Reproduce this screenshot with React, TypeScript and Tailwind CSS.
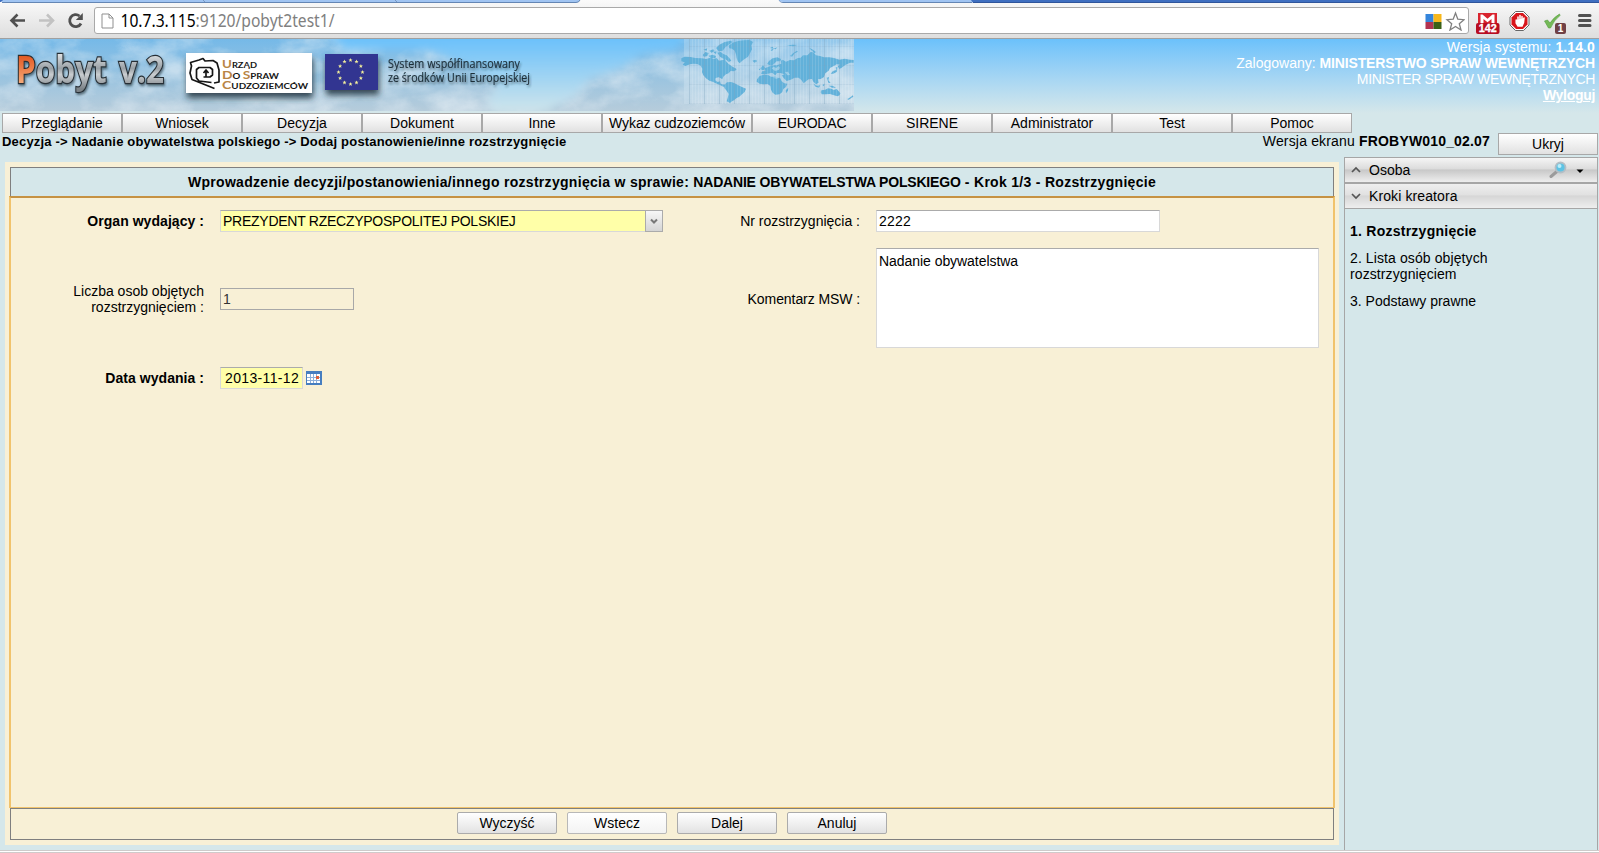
import React from "react";

const menu = [
  ["Przeglądanie", "w-[120px]"],
  ["Wniosek", "w-[120px]"],
  ["Decyzja", "w-[120px]"],
  ["Dokument", "w-[120px]"],
  ["Inne", "w-[120px]"],
  ["Wykaz cudzoziemców", "w-[150px] tracking-[-0.1px]"],
  ["EURODAC", "w-[120px] tracking-[-0.2px]"],
  ["SIRENE", "w-[120px]"],
  ["Administrator", "w-[120px]"],
  ["Test", "w-[120px]"],
  ["Pomoc", "w-[120px]"],
];

function Toolbar() {
  return (
    <div className="relative h-[39px] shrink-0 border-b border-[#a0a0a0] bg-gradient-to-b from-[#fafafa] to-[#dedede]">
      <svg className="absolute left-0 top-0" width="1599" height="3" viewBox="0 0 1599 3">
        <path d="M0 0H580Q579 2.5 576 2.5H3L0 0Z" fill="#a0c4f2" />
        <path d="M2 2.5H576Q579 2.5 580 0M779 0Q780 2.5 783 2.5H972" fill="none" stroke="#6486b4" />
        <path d="M779 0H972V2H783Q780 2 779 0Z" fill="#a0c4f2" />
        <path d="M971 0H1599V3H973Z" fill="#3f6fc0" />
        <path d="M973 2.5H1599" stroke="#2f559b" />
        <path d="M0 0H3L1 2H0Z" fill="#3f6fc0" />
        <path d="M203 0L205 2M395 0L397 2" stroke="#7797c2" />
      </svg>
      <div className="flex h-full items-start">
        <svg className="mt-[7px] shrink-0" width="94" height="27" viewBox="0 7 94 27">
          <path d="M25 20.5H12M17.5 14.5L11.5 20.5L17.5 26.5" fill="none" stroke="#505050" strokeWidth="2.6" />
          <path d="M39 20.5H52M47 14.5L53 20.5L47 26.5" fill="none" stroke="#c2c2c2" strokeWidth="2.6" />
          <path d="M81 23.500A6 6 0 1 1 79.500 16" fill="none" stroke="#505050" strokeWidth="2.800" />
          <path d="M82.800 13V20H75.800Z" fill="#505050" />
        </svg>
        <div className="mt-[7px] flex h-[27px] w-[1375px] shrink-0 items-center rounded-[3px] border border-[#a9a9a9] bg-white">
          <svg className="ml-[6px]" width="13" height="16" viewBox="0 0 13 16">
            <path d="M1 1H8L12 5V15H1ZM8 1V5H12" fill="#fff" stroke="#8f8f8f" />
          </svg>
          <svg className="ml-[6px] block overflow-visible font-['Noto_Sans',sans-serif]" width="220" height="24">
            <text x="0.500" y="18" textLength="214" lengthAdjust="spacingAndGlyphs" fontSize="17.500" fill="#808080">
              <tspan fill="#000">10.7.3.115</tspan>:9120/pobyt2test1/
            </text>
          </svg>
          <svg className="ml-auto mr-[3px]" width="41" height="20" viewBox="1424 10 41 20">
            <rect x="1425.500" y="13" width="8" height="8" fill="#3585dc" />
            <rect x="1433.500" y="13" width="8" height="8" fill="#f7b71b" />
            <rect x="1425.500" y="21" width="8" height="7" fill="#b23351" />
            <rect x="1433.500" y="21" width="8" height="7" fill="#3b6117" />
            <path d="M1455.500 12L1457.800 18.200L1464 18.700L1459.300 22.700L1461 29L1455.500 25.500L1450 29L1451.700 22.700L1447 18.700L1453.200 18.200Z" fill="#fff" stroke="#808080" strokeWidth="1.300" />
          </svg>
        </div>
        <svg className="mt-[7px] shrink-0" width="130" height="30" viewBox="1469 7 130 30">
          <rect x="1478" y="13" width="19" height="13" fill="#d9232e" />
          <path d="M1480.500 23V14.500H1482.500L1487.500 18.800L1492.500 14.500H1494.500V23H1491.500V19L1487.500 22.300L1483.500 19V23Z" fill="#fff" />
          <rect x="1476" y="23" width="23.500" height="11" rx="2" fill="#b80d20" />
          <text x="1487.700" y="32.200" fontSize="10" fontWeight="bold" textAnchor="middle" fill="#fff" stroke="#fff" strokeWidth=".3" textLength="18" lengthAdjust="spacingAndGlyphs">142</text>
          <path d="M1515.500 11.500H1523.500L1529 17V25L1523.500 30.500H1515.500L1510 25V17Z" fill="#fff" stroke="#666" />
          <path d="M1516 13H1523L1527.500 17.500V24.500L1523 29H1516L1511.500 24.500V17.500Z" fill="#d8151b" />
          <path d="M1516.200 20V23L1518 26H1522L1523.500 22.500L1524 18M1518 22V17M1520 22V15.500M1522 22V16.500" fill="#fff" stroke="#fff" strokeWidth="1.500" strokeLinecap="round" />
          <path d="M1544.500 21L1547.500 20L1550 23Q1554 17 1559.500 14L1560 15.500Q1554 20 1550.500 28H1548.500Z" fill="#74b957" stroke="#539b3b" strokeWidth=".6" />
          <rect x="1555" y="23" width="11" height="11" rx="2" fill="#704045" />
          <text x="1560.500" y="32.200" fontSize="10" fontWeight="bold" textAnchor="middle" fill="#fff">1</text>
          <path d="M1579.500 15.500H1590M1579.500 20.500H1590M1579.500 25.500H1590" stroke="#505050" strokeWidth="3" strokeLinecap="round" />
        </svg>
      </div>
    </div>
  );
}

const stars = Array.from({ length: 12 }, (_, i) => i * 30);

function WorldMap() {
  return (
    <g transform="translate(670 38) scale(.33333)" fill="#62b1da">
      <path d="M34 61L44 56L62 57L76 60L96 61L108 63L122 59L132 63L140 60L147 68L158 66L164 62L168 70L176 78L188 86L200 94L192 100L182 99L176 106L168 109L160 116L157 124L152 121L146 118L137 120L136 127L143 132L150 130L152 137L164 140L171 146L160 146L148 140L137 136L128 131L118 128L108 121L100 112L96 102L97 92L92 83L82 78L70 77L60 79L46 84L38 80L44 73L34 70Z" />
      <path d="M98 51L106 42L116 45L112 54L102 56ZM116 53L128 50L138 54L136 61L122 60ZM118 38L130 34L134 40L124 44ZM138 30L148 20L164 12L182 8L188 12L176 20L166 28L158 38L146 40ZM142 44L152 42L160 48L170 52L178 60L184 68L176 72L170 66L160 62L150 56ZM130 43L140 40L138 48ZM100 35L112 31L110 38ZM186 92L196 90L198 97L188 98Z" />
      <path d="M176 23L188 14L204 9L222 7L238 6L250 12L244 22L246 34L240 46L234 56L224 63L216 69L209 76L203 70L200 60L198 48L194 38L186 32L178 31ZM247 68L256 65L262 69L254 74ZM299 30L308 26L312 32L306 39L301 36L318 29L322 27L318 34Z" />
      <path d="M163 140L171 133L184 132L194 136L205 142L216 147L228 152L224 162L216 169L208 176L199 181L192 187L186 190L180 195L170 190L173 180L176 168L170 158L163 150Z" />
      <path d="M261 124L269 114L281 110L293 110L303 116L316 116L330 119L335 130L343 136L352 137L348 147L340 153L337 162L329 169L316 170L308 164L303 155L301 144L293 138L280 139L269 137L260 131ZM347 157L355 149L354 158L348 166Z" />
      <path d="M273 108L276 100L286 99L284 91L292 88L303 83L312 82L320 82L334 77L333 68L338 65L348 71L360 66L372 67L383 60L392 59L399 52L412 52L422 42L430 43L438 52L450 54L462 58L478 58L492 60L508 65L524 62L540 65L551 66L551 74L540 74L526 81L515 89L508 93L503 84L510 80L500 79L490 85L480 90L476 98L466 106L462 117L452 123L444 124L446 134L438 139L430 131L426 123L416 124L408 130L401 136L394 126L386 119L374 119L362 125L350 129L341 120L335 112L344 109L331 105L321 105L316 112L306 104L294 107L284 109Z" />
      <path d="M291 78L297 69L308 61L322 58L333 63L331 70L320 70L311 79L303 83ZM272 90L279 82L285 89L283 95L275 97ZM266 94L272 91L269 97ZM360 54L370 45L381 38L384 41L374 46L366 56ZM417 29L427 34L438 42L434 46L424 37ZM351 23L367 20L381 21L370 25ZM482 107L489 99L499 96L497 88L502 87L501 101L490 107ZM470 119L477 117L475 127L482 135L475 134ZM431 137L441 143L451 142L447 149L436 146ZM457 141L464 137L462 145ZM476 143L488 143L498 149L486 149Z" />
      <path d="M454 157L466 155L474 151L484 152L491 156L500 153L505 158L511 166L509 172L502 175L492 172L480 168L466 169L455 169L452 163ZM532 183L541 178L548 172L550 176L543 181L535 186Z" />
      <path d="M305 91L311 86L319 90L325 84L331 89L326 96L315 99ZM345 102L354 101L360 111L352 112ZM309 119L322 116L331 118L320 122Z" fill="#b6d9ec" opacity=".65" />
    </g>
  );
}

function Banner() {
  return (
    <div className="flex h-[74px] shrink-0 justify-between bg-gradient-to-b from-[#6bc1fb] to-[#d5e7ea]">
      <svg width="854" height="72" viewBox="0 39 854 72" className="shrink-0">
        <defs>
          <linearGradient id="sky" x1="0" y1="0" x2="0" y2="1">
            <stop offset="0" stopColor="#75b9e8" />
            <stop offset=".5" stopColor="#98c3e0" />
            <stop offset="1" stopColor="#b6ccdb" />
          </linearGradient>
          <linearGradient id="gap" gradientUnits="userSpaceOnUse" x1="0" y1="39" x2="0" y2="111">
            <stop offset="0" stopColor="#6bc1fb" />
            <stop offset="1" stopColor="#cfe5eb" />
          </linearGradient>
          <linearGradient id="metal" gradientUnits="userSpaceOnUse" x1="0" y1="52" x2="0" y2="93">
            <stop offset=".05" stopColor="#dfe2e4" />
            <stop offset=".4" stopColor="#9aa1a6" />
            <stop offset=".55" stopColor="#c9cdd0" />
            <stop offset=".9" stopColor="#7c8388" />
          </linearGradient>
          <linearGradient id="orange" gradientUnits="userSpaceOnUse" x1="0" y1="54" x2="0" y2="84">
            <stop offset="0" stopColor="#e2541c" />
            <stop offset="1" stopColor="#f6ad7c" />
          </linearGradient>
          <filter id="soft" x="-20%" y="-30%" width="140%" height="160%"><feGaussianBlur stdDeviation="4" /></filter>
          <filter id="clouds" x="0" y="0" width="100%" height="100%">
            <feTurbulence type="fractalNoise" baseFrequency=".022 .034" numOctaves="5" seed="8" />
            <feColorMatrix values="0 0 0 0 .80  0 0 0 0 .87  0 0 0 0 .92  2.2 0 0 0 -.8" />
          </filter>
          <filter id="shade" x="-20%" y="-20%" width="150%" height="170%"><feDropShadow dx="1" dy="5" stdDeviation="3" floodColor="#20303c" floodOpacity=".85" /></filter>
          <filter id="textShade" x="-10%" y="-20%" width="120%" height="160%"><feDropShadow dx="1" dy="2" stdDeviation="1.200" floodColor="#20303c" floodOpacity=".6" /></filter>
          <pattern id="grid" width="15" height="19" patternUnits="userSpaceOnUse" x="689" y="46">
            <path d="M.5 0V19" stroke="#7da3bd" strokeOpacity=".35" fill="none" />
            <path d="M0 .5H15" stroke="#7da3bd" strokeOpacity=".15" fill="none" />
            <path d="M3.500 0V19M6.500 0V19M9.500 0V19M12.500 0V19" stroke="#fff" strokeOpacity=".12" />
          </pattern>
        </defs>
        <rect y="39" width="854" height="72" fill="url(#sky)" />
        <rect y="39" width="854" height="72" filter="url(#clouds)" opacity=".6" />
        <path d="M326 30H690L676 50L642 54L620 68L590 78L575 95L546 112H492L488 99L500 84L470 66L430 50L345 50Z" fill="url(#gap)" filter="url(#soft)" />
        <rect x="684" y="39" width="170" height="65" fill="#d9eaf5" opacity=".3" />
        <WorldMap />
        <rect x="689" y="39" width="165" height="65" fill="url(#grid)" />
        <text x="16" y="83" textLength="148" lengthAdjust="spacingAndGlyphs" xmlSpace="preserve" fontFamily="Open Sans, sans-serif" fontSize="38" fontWeight="700" filter="url(#textShade)" stroke="#272f35" strokeWidth="2.400" paintOrder="stroke" fill="url(#metal)">
          <tspan fill="url(#orange)">P</tspan>obyt<tspan dx="5"> v.2</tspan>
        </text>
        <rect x="186" y="53" width="126" height="40" fill="#fff" filter="url(#shade)" />
        <path d="M214.500 88.500L202 83.500L192 79.500L190 73L191.500 66L190.500 62.500L199 60L203 58.500L205 61L213 60.500L217 63L219 70V82L214 83M211.500 82.500L199 81L196.500 78V69.500L199 67.500H210L212.500 69.500V75L210 77H203.500M206 71.500V77M203.500 73L206 70L208.500 73" fill="none" stroke="#161616" strokeWidth="1.700" strokeLinejoin="round" />
        <g fill="#161616" fontFamily="Lato, sans-serif" fontWeight="700">
          <text x="222" y="68" fontSize="8" textLength="35" lengthAdjust="spacingAndGlyphs"><tspan fontSize="11.500" fill="#b98544">U</tspan>RZĄD</text>
          <text x="222" y="78.500" fontSize="8" textLength="57" lengthAdjust="spacingAndGlyphs"><tspan fontSize="11.500" fill="#b98544">D</tspan>O <tspan fontSize="11.500" fill="#b98544">S</tspan>PRAW</text>
          <text x="222" y="89" fontSize="8" textLength="86" lengthAdjust="spacingAndGlyphs"><tspan fontSize="11.500" fill="#b98544">C</tspan>UDZOZIEMCÓW</text>
        </g>
        <rect x="325" y="54" width="53" height="36" fill="#313591" filter="url(#shade)" />
        {stars.map((angle) => (
          <path key={angle} transform={`rotate(${angle} 350.500 72) translate(350.500 60) rotate(${-angle})`} d="M0-2L.6-.6L2-.6L.9.400L1.300 2L0 1L-1.300 2L-.9.400L-2-.6L-.6-.6Z" fill="#f2ee9b" />
        ))}
        <g fill="#1d2f3a" stroke="#1d2f3a" strokeWidth=".15" fontFamily="Open Sans, sans-serif" fontSize="11.800" filter="url(#textShade)">
          <text x="388" y="68" textLength="132" lengthAdjust="spacingAndGlyphs">System współfinansowany</text>
          <text x="388" y="82" textLength="142" lengthAdjust="spacingAndGlyphs">ze środków Unii Europejskiej</text>
        </g>
      </svg>
      <div className="mr-[4px] text-right text-white">
        <div className="tracking-[0.1px]">Wersja systemu: <b>1.14.0</b></div>
        <div>Zalogowany: <b className="tracking-[-0.15px]">MINISTERSTWO SPRAW WEWNĘTRZYCH</b></div>
        <div className="tracking-[-0.35px]">MINISTER SPRAW WEWNĘTRZNYCH</div>
        <div className="tracking-[-0.3px]"><b className="underline">Wyloguj</b></div>
      </div>
    </div>
  );
}

function Form() {
  return (
    <main className="mt-[5px] ml-[5px] flex h-[683px] w-[1334px] flex-col bg-[#f8f0d6] p-[5px] pr-[4px]">
      <div className="flex h-[29px] w-[1324px] items-center justify-center border border-b-0 border-[#7f7f7f] bg-[#d5e7ea] font-bold">
        <p className="whitespace-pre tracking-[0.3px]">Wprowadzenie decyzji/postanowienia/innego rozstrzygnięcia w sprawie: <span className="tracking-[-0.19px]">NADANIE OBYWATELSTWA POLSKIEGO</span> - Krok 1/3 - Rozstrzygnięcie</p>
      </div>
      <div className="-ml-px flex h-[612px] w-[1326px] border-2 border-b border-[#f1c36c] border-t-[#c69243] pt-[12px]">
        <div className="w-[652px]">
          <Row label="Organ wydający :" bold>
            <div className="flex h-[22px] w-[443px]">
              <div className="flex flex-1 items-center border border-r-0 border-[#d8d8d8] border-t-[#ababab] bg-[#ffffa8] pl-[2px] tracking-[-0.26px]">PREZYDENT RZECZYPOSPOLITEJ POLSKIEJ</div>
              <button className="flex w-[18px] items-center justify-center border border-[#ababab] bg-gradient-to-b from-[#f7f7f7] to-[#d5d5d5]">
                <svg width="8" height="7" viewBox="0 0 8 7"><path d="M1 1.500L4 4.500L7 1.500" fill="none" stroke="#777" strokeWidth="2" /></svg>
              </button>
            </div>
          </Row>
          <div className="h-[47px]" />
          <Row label={<>Liczba osob objętych<br />rozstrzygnięciem :</>} tall>
            <div className="flex h-[22px] w-[134px] items-center border border-[#a8a8a8] pl-[2px] text-[#333]">1</div>
          </Row>
          <div className="h-[49px]" />
          <Row label="Data wydania :" bold>
            <div className="flex h-[22px] w-[83px] items-center border border-[#d8d8d8] border-t-[#ababab] bg-[#ffffa8] pl-[4px] tracking-[0.35px]">2013-11-12</div>
            <svg className="ml-[3px]" width="16" height="14" viewBox="0 0 16 14">
              <rect width="16" height="14" fill="#467ec0" />
              <path d="M1 3H14V12H1Z" fill="#fff" />
              <path d="M1 6.500H14M1 9.500H14M4.500 3V12M7.500 3V12M10.500 3V12" stroke="#8dafd9" />
              <rect x="10" y="5" width="3" height="3" fill="#de603b" />
            </svg>
          </Row>
        </div>
        <div>
          <Row label="Nr rozstrzygnięcia :" right>
            <div className="flex h-[22px] w-[284px] items-center border border-[#d8d8d8] border-t-[#ababab] bg-white pl-[2px] tracking-[0.2px]">2222</div>
          </Row>
          <div className="h-[16px]" />
          <div className="flex items-center">
            <div className="w-[197px] pt-[2px] text-right tracking-[-0.08px]">Komentarz MSW :</div>
            <div className="ml-[16px] h-[100px] w-[443px] border border-[#d8d8d8] border-t-[#ababab] bg-white pt-[4px] pl-[2px] tracking-[-0.05px]">Nadanie obywatelstwa</div>
          </div>
        </div>
      </div>
      <div className="flex h-[32px] w-[1324px] justify-center gap-[10px] border border-[#7f7f7f] pt-[3px]">
        {["Wyczyść", "Wstecz", "Dalej", "Anuluj"].map((name) => (
          <button key={name} className={name === "Wstecz" ? "h-[22px] w-[100px] rounded-[2px] border border-[#b8b8b8] bg-gradient-to-b from-white to-[#f3f3f3]" : "h-[22px] w-[100px] rounded-[2px] border border-[#ababab] bg-gradient-to-b from-white to-[#e2e2e2]"}>{name}</button>
        ))}
      </div>
    </main>
  );
}

function Row({ label, children, bold, tall, right }: { label: React.ReactNode; children: React.ReactNode; bold?: boolean; tall?: boolean; right?: boolean }) {
  return (
    <div className={tall ? "flex h-[39px] items-center" : "flex h-[22px] items-center"}>
      <div className={right ? "w-[197px] text-right" : bold ? "w-[193px] text-right font-bold tracking-[0.05px]" : "w-[193px] text-right"}>{label}</div>
      <div className="ml-[16px] flex items-center">{children}</div>
    </div>
  );
}

function Chevron({ up }: { up?: boolean }) {
  return (
    <svg className="mr-[8px]" width="10" height="8" viewBox="0 0 10 8">
      <path d={up ? "M1 6L5 2L9 6" : "M1 2L5 6L9 2"} fill="none" stroke="#555" strokeWidth="1.700" />
    </svg>
  );
}

function Sidebar() {
  return (
    <aside className="ml-[5px] h-[694px] w-[254px] border border-[#a6a6a6]">
      <div className="flex h-[25px] items-center border-b border-[#a6a6a6] bg-[linear-gradient(#f5f5f5,#dcdcdc_45%,#c8c8c8_50%,#eeeeee)] pl-[6px]">
        <Chevron up />Osoba
        <svg className="ml-auto mr-[13px]" width="35" height="18" viewBox="0 0 35 18">
          <path d="M2 15.500L9 9.500" stroke="#9b9b9b" strokeWidth="3" strokeLinecap="round" />
          <circle cx="11.500" cy="6.500" r="5" fill="#5ec3e4" stroke="#b4bec5" strokeWidth="1.800" />
          <circle cx="10.500" cy="5" r="2" fill="#bdeefa" />
          <path d="M27.500 8.500H34.500L31 12Z" fill="#000" />
        </svg>
      </div>
      <div className="flex h-[26px] items-center border-y border-[#a6a6a6] bg-[linear-gradient(#efefef,#e1e1e1_45%,#d6d6d6_50%,#eeeeee)] pl-[6px] tracking-[0.1px]"><Chevron />Kroki kreatora</div>
      <div className="flex flex-col gap-[11px] pt-[14px] pl-[5px]">
        <b className="tracking-[0.25px]">1. Rozstrzygnięcie</b>
        <div className="tracking-[0.1px]">2. Lista osób objętych<br />rozstrzygnięciem</div>
        <div>3. Podstawy prawne</div>
      </div>
    </aside>
  );
}

export default function App() {
  return (
    <div className="flex h-[853px] w-[1599px] flex-col overflow-hidden bg-[#d5e7ea] font-['Liberation_Sans',Arial,sans-serif] text-[14px] leading-[16px] text-black">
      <Toolbar />
      <Banner />
      <nav className="flex h-[20px] shrink-0 pl-[2px]">
        {menu.map(([name, width]) => (
          <div key={name} className={`${width} flex items-center justify-center border border-[#a8a8a8] bg-gradient-to-b from-white to-[#e1e1e1]`}>{name}</div>
        ))}
      </nav>
      <div className="flex h-[24px] shrink-0">
        <b className="ml-[2px] flex-1 pt-px text-[13px] tracking-[0.19px]">Decyzja -&gt; Nadanie obywatelstwa polskiego -&gt; Dodaj postanowienie/inne rozstrzygnięcie</b>
        <span className="mr-[8px] tracking-[0.17px]">Wersja ekranu <b>FROBYW010_02.07</b></span>
        <button className="mr-px h-[22px] w-[100px] border border-[#a8a8a8] bg-gradient-to-b from-white to-[#e1e1e1]">Ukryj</button>
      </div>
      <div className="flex h-[693px] shrink-0"><Form /><Sidebar /></div>
      <div className="h-[3px] shrink-0 border-y border-[#cfcaca] bg-white" />
    </div>
  );
}
